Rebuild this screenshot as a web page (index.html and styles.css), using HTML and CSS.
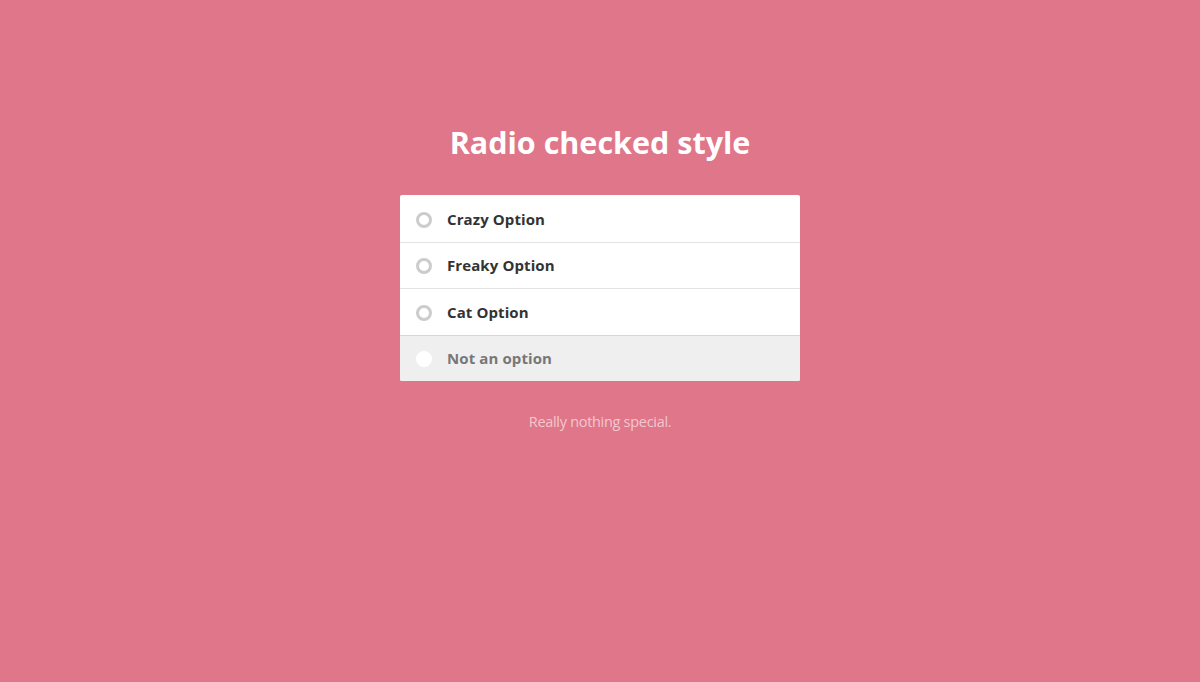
FILE: index.html
```html
<!DOCTYPE html>
<html>
<head>
<meta charset="utf-8">
<link rel="stylesheet" href="styles.css">
</head>
<body>
<main class="page">
  <h1 class="title">Radio checked style</h1>
  <ul class="list">
    <li class="item"><span class="radio"></span><span class="label">Crazy Option</span></li>
    <li class="item"><span class="radio"></span><span class="label">Freaky Option</span></li>
    <li class="item"><span class="radio"></span><span class="label">Cat Option</span></li>
    <li class="item disabled"><span class="radio"></span><span class="label">Not an option</span></li>
  </ul>
  <p class="note">Really nothing special.</p>
</main>
</body>
</html>
```
FILE: styles.css
```css
html, body {
  margin: 0;
  padding: 0;
  height: 100%;
  background: #e07689;
  font-family: "Open Sans", "Noto Sans", sans-serif;
}
.page {
  display: flex;
  flex-direction: column;
  align-items: center;
  padding-top: 121px;
}
.title {
  margin: 0;
  font-size: 30.5px;
  line-height: 42px;
  font-weight: 700;
  color: #fff;
}
.list {
  list-style: none;
  margin: 32px 0 0;
  padding: 1px 0 0;
  width: 400px;
  background: #fff;
  border-radius: 2px;
  overflow: hidden;
}
.item {
  display: flex;
  align-items: center;
  height: 45.5px;
  padding-left: 16px;
  border-top: 1px solid #e3e3e3;
}
.item:first-child {
  border-top: none;
}
.radio {
  box-sizing: border-box;
  width: 16px;
  height: 16px;
  margin-top: 2px;
  border: 3px solid #cccccc;
  border-radius: 50%;
  background: #fff;
}
.label {
  margin-left: 15px;
  font-size: 15px;
  font-weight: 700;
  color: #333;
  letter-spacing: 0.1px;
}
.disabled {
  background: #efefef;
  border-top-color: #d6d6d6;
}
.disabled .radio {
  border-color: #fff;
}
.disabled .label {
  color: #777;
}
.note {
  margin: 31px 0 0;
  font-size: 14.5px;
  color: rgba(255, 255, 255, 0.6);
  letter-spacing: -0.3px;
}
```
